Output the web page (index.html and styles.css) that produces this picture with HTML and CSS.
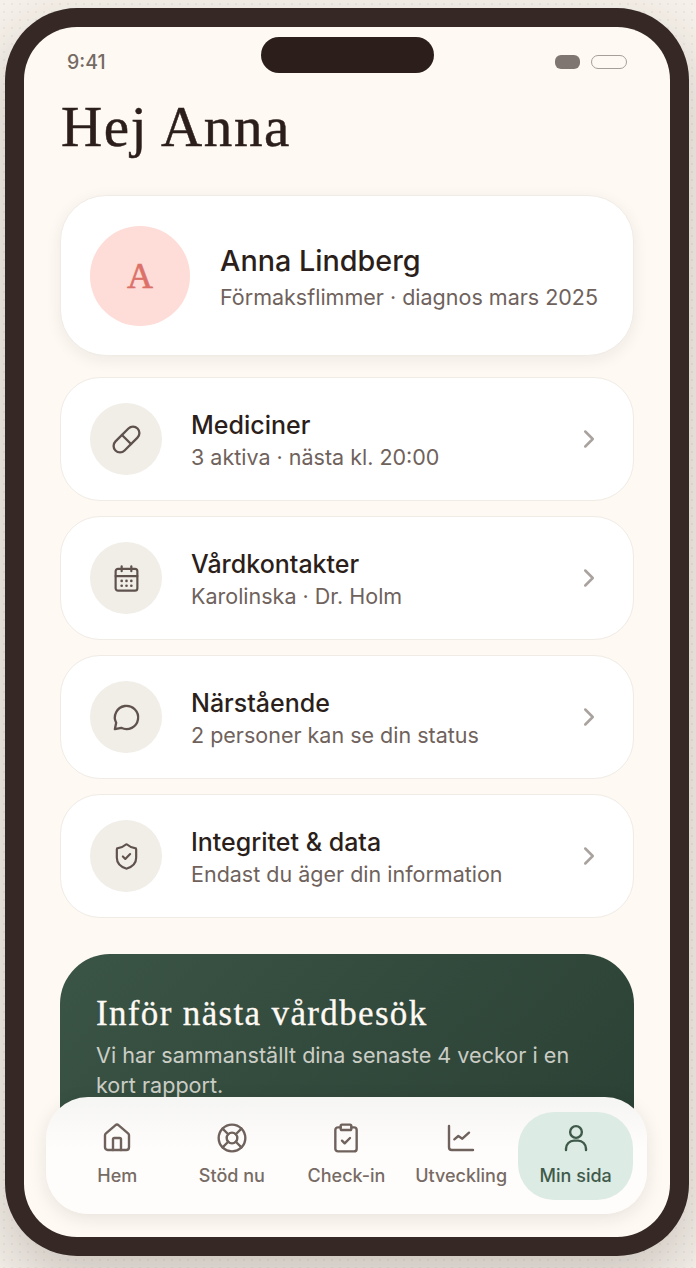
FILE: index.html
```html
<!DOCTYPE html>
<html lang="sv">
<head>
    <meta charset="UTF-8">
    <meta name="viewport" content="width=device-width, initial-scale=1.0">
    <title>Min sida</title>
    <link rel="stylesheet" href="styles.css">
</head>
<body>
    <div class="phone">
        <div class="screen">
            <div class="island"></div>
            <div class="status-bar">
                <span class="time">9:41</span>
                <div class="status-icons">
                    <span class="signal"></span>
                    <span class="battery"></span>
                </div>
            </div>

            <div class="content">
                <h1 class="greeting">Hej Anna</h1>

                <div class="profile-card">
                    <div class="avatar">A</div>
                    <div>
                        <div class="profile-name">Anna Lindberg</div>
                        <div class="profile-sub">Förmaksflimmer · diagnos mars 2025</div>
                    </div>
                </div>

                <div class="menu-list">
                    <div class="menu-row">
                        <div class="menu-icon">
                            <svg class="icon" viewBox="0 0 24 24"><path d="m10.5 20.5 10-10a4.95 4.95 0 1 0-7-7l-10 10a4.95 4.95 0 1 0 7 7Z"/><path d="m8.5 8.5 7 7"/></svg>
                        </div>
                        <div class="menu-text">
                            <div class="menu-title">Mediciner</div>
                            <div class="menu-sub">3 aktiva · nästa kl. 20:00</div>
                        </div>
                        <svg class="chevron" viewBox="0 0 24 24"><path d="m9 18 6-6-6-6"/></svg>
                    </div>
                    <div class="menu-row">
                        <div class="menu-icon">
                            <svg class="icon icon-small" viewBox="0 0 24 24"><path d="M8 2v4"/><path d="M16 2v4"/><rect x="3" y="4" width="18" height="18" rx="2"/><path d="M3 10h18"/><path class="dot" d="M8 14h.01"/><path class="dot" d="M12 14h.01"/><path class="dot" d="M16 14h.01"/><path class="dot" d="M8 18h.01"/><path class="dot" d="M12 18h.01"/><path class="dot" d="M16 18h.01"/></svg>
                        </div>
                        <div class="menu-text">
                            <div class="menu-title">Vårdkontakter</div>
                            <div class="menu-sub">Karolinska · Dr. Holm</div>
                        </div>
                        <svg class="chevron" viewBox="0 0 24 24"><path d="m9 18 6-6-6-6"/></svg>
                    </div>
                    <div class="menu-row">
                        <div class="menu-icon">
                            <svg class="icon" viewBox="0 0 24 24"><path d="M7.9 20A9 9 0 1 0 4 16.1L3 21Z"/></svg>
                        </div>
                        <div class="menu-text">
                            <div class="menu-title">Närstående</div>
                            <div class="menu-sub">2 personer kan se din status</div>
                        </div>
                        <svg class="chevron" viewBox="0 0 24 24"><path d="m9 18 6-6-6-6"/></svg>
                    </div>
                    <div class="menu-row">
                        <div class="menu-icon">
                            <svg class="icon icon-small" viewBox="0 0 24 24"><path d="M20 13c0 5-3.5 7.5-7.66 8.95a1 1 0 0 1-.67-.01C7.5 20.5 4 18 4 13V6a1 1 0 0 1 1-1c2 0 4.5-1.2 6.24-2.72a1.17 1.17 0 0 1 1.52 0C14.51 3.81 17 5 19 5a1 1 0 0 1 1 1z"/><path d="m9 12 2 2 4-4"/></svg>
                        </div>
                        <div class="menu-text">
                            <div class="menu-title">Integritet &amp; data</div>
                            <div class="menu-sub">Endast du äger din information</div>
                        </div>
                        <svg class="chevron" viewBox="0 0 24 24"><path d="m9 18 6-6-6-6"/></svg>
                    </div>
                </div>

                <div class="report-card">
                    <h2 class="report-title">Inför nästa vårdbesök</h2>
                    <p class="report-text">Vi har sammanställt dina senaste 4 veckor i en kort rapport.</p>
                </div>
            </div>

            <nav class="tab-bar">
                <div class="tab">
                    <svg class="icon" viewBox="0 0 24 24"><path d="M15 21v-8a1 1 0 0 0-1-1h-4a1 1 0 0 0-1 1v8"/><path d="M3 10a2 2 0 0 1 .709-1.528l7-5.999a2 2 0 0 1 2.582 0l7 5.999A2 2 0 0 1 21 10v9a2 2 0 0 1-2 2H5a2 2 0 0 1-2-2z"/></svg>
                    <span>Hem</span>
                </div>
                <div class="tab">
                    <svg class="icon" viewBox="0 0 24 24"><circle cx="12" cy="12" r="10"/><path d="m4.93 4.93 4.24 4.24"/><path d="m14.83 9.17 4.24-4.24"/><path d="m14.83 14.83 4.24 4.24"/><path d="m9.17 14.83-4.24 4.24"/><circle cx="12" cy="12" r="4"/></svg>
                    <span>Stöd nu</span>
                </div>
                <div class="tab">
                    <svg class="icon" viewBox="0 0 24 24"><rect x="8" y="2" width="8" height="4" rx="1"/><path d="M16 4h2a2 2 0 0 1 2 2v14a2 2 0 0 1-2 2H6a2 2 0 0 1-2-2V6a2 2 0 0 1 2-2h2"/><path d="m9 14 2 2 4-4"/></svg>
                    <span>Check-in</span>
                </div>
                <div class="tab">
                    <svg class="icon" viewBox="0 0 24 24"><path d="M3 3v16a2 2 0 0 0 2 2h16"/><path d="m7 13 3-2.5 3 2 5-4.5"/></svg>
                    <span>Utveckling</span>
                </div>
                <div class="tab tab-active">
                    <svg class="icon" viewBox="0 0 24 24"><circle cx="12" cy="7.5" r="4.4"/><path d="M4.5 21v-1a6 6 0 0 1 6-6h3a6 6 0 0 1 6 6v1"/></svg>
                    <span>Min sida</span>
                </div>
            </nav>
        </div>
    </div>
</body>
</html>
```

FILE: styles.css
```css
* {
    box-sizing: border-box;
}
html, body {
    height: 100%;
}
body {
    margin: 0;
    padding: 8px 7px 12px 5px;
    overflow: hidden;
    font-family: 'Inter', sans-serif;
    color: #2c1f1b;
    background-color: #f6f1ea;
    background-image: radial-gradient(rgba(120, 100, 85, 0.07) 1px, transparent 1.4px);
    background-size: 8px 8px;
}
.phone {
    width: 684px;
    height: 1248px;
    padding: 19px;
    border-radius: 72px;
    background-color: #352825;
    box-shadow: 0 24px 60px rgba(44, 31, 27, 0.22);
}
.screen {
    position: relative;
    height: 100%;
    border-radius: 53px;
    background-color: #fef9f3;
    overflow: hidden;
}
.island {
    position: absolute;
    top: 10px;
    left: 237px;
    width: 173px;
    height: 36px;
    border-radius: 18px;
    background-color: #2c1f1b;
}
.status-bar {
    display: flex;
    justify-content: space-between;
    align-items: center;
    height: 70px;
    padding: 0 43px;
}
.time {
    font-size: 19.5px;
    font-weight: 500;
    color: #766a64;
}
.status-icons {
    display: flex;
    gap: 11px;
}
.signal {
    width: 25px;
    height: 14px;
    border-radius: 6px;
    background-color: #7f7672;
}
.battery {
    width: 36px;
    height: 14px;
    border-radius: 7px;
    border: 1px solid #a69e99;
}
.content {
    padding: 0 36px;
}
.greeting {
    margin: -2px 0 36px 1px;
    font-family: 'Liberation Serif', serif;
    font-size: 57px;
    font-weight: 400;
    line-height: 64px;
    letter-spacing: 1.65px;
    color: #2c1f1b;
    -webkit-text-stroke: 0.5px #2c1f1b;
}
.profile-card {
    display: flex;
    align-items: center;
    gap: 30px;
    height: 161px;
    padding: 0 29px;
    margin-bottom: 21px;
    border-radius: 46px;
    border: 1px solid #f0ebe5;
    background-color: #ffffff;
    box-shadow: 0 4px 16px rgba(44, 31, 27, 0.07);
}
.avatar {
    display: flex;
    align-items: center;
    justify-content: center;
    width: 100px;
    height: 100px;
    border-radius: 50%;
    background-color: #fedcd7;
    color: #dc7169;
    font-family: 'Liberation Serif', serif;
    font-size: 36px;
    -webkit-text-stroke: 0.6px #dc7169;
}
.profile-name {
    margin-top: 5px;
    font-size: 28.75px;
    font-weight: 500;
    line-height: 36px;
    color: #2c1f1b;
}
.profile-sub {
    margin-top: 2px;
    font-size: 21.5px;
    line-height: 32px;
    color: #6f625c;
}
.menu-list {
    display: flex;
    flex-direction: column;
    gap: 15px;
}
.menu-row {
    display: flex;
    align-items: center;
    height: 124px;
    padding: 0 29px;
    border-radius: 40px;
    border: 1px solid #f0ebe5;
    background-color: #ffffff;
}
.menu-icon {
    display: flex;
    align-items: center;
    justify-content: center;
    flex-shrink: 0;
    width: 72px;
    height: 72px;
    border-radius: 50%;
    background-color: #f1ede7;
}
.menu-text {
    flex: 1;
    margin-left: 29px;
    padding-top: 4px;
}
.menu-title {
    font-size: 25px;
    font-weight: 500;
    line-height: 32px;
    color: #2c1f1b;
}
.menu-sub {
    font-size: 21.5px;
    line-height: 32px;
    color: #6f625c;
}
.icon {
    width: 31px;
    height: 31px;
    fill: none;
    stroke: #5f524d;
    stroke-width: 1.8;
    stroke-linecap: round;
    stroke-linejoin: round;
}
.icon-small {
    width: 29px;
    height: 29px;
}
.dot {
    stroke-width: 2.2;
}
.chevron {
    width: 30px;
    height: 30px;
    fill: none;
    stroke: #a9a29e;
    stroke-width: 2;
    stroke-linecap: round;
    stroke-linejoin: round;
}
.report-card {
    height: 220px;
    margin-top: 36px;
    padding: 38px 36px;
    border-radius: 50px;
    color: #fef9f3;
    background: linear-gradient(135deg, #3a5445, #2a4034);
}
.report-title {
    margin: 0;
    font-family: 'Liberation Serif', serif;
    font-size: 35px;
    font-weight: 400;
    line-height: 44px;
    letter-spacing: 1.35px;
    -webkit-text-stroke: 0.3px #fef9f3;
}
.report-text {
    margin: 4px 0 0;
    font-size: 21.6px;
    line-height: 30px;
    color: rgba(254, 249, 243, 0.75);
}
.tab-bar {
    position: absolute;
    left: 22px;
    right: 23px;
    bottom: 23px;
    display: grid;
    grid-template-columns: repeat(5, 1fr);
    height: 117px;
    padding: 15px 14px 14px;
    border-radius: 42px;
    background: linear-gradient(180deg, #f5f5f3, #fffdfb 45%);
    box-shadow: 0 4px 18px rgba(44, 31, 27, 0.1);
}
.tab {
    display: flex;
    flex-direction: column;
    align-items: center;
    gap: 11px;
    padding-top: 10px;
    border-radius: 36px;
    font-size: 18px;
    font-weight: 500;
    color: #776b65;
}
.tab .icon {
    width: 32px;
    height: 32px;
    stroke: #6f625c;
}
.tab-active {
    background-color: #dcebe3;
    color: #3f5a4b;
}
.tab-active .icon {
    stroke: #3f5a4b;
}
```
